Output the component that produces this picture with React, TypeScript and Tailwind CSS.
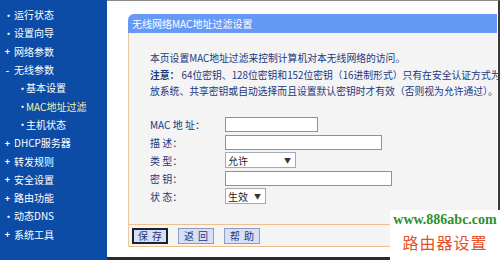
const MENU: { label: string; mark: string; sub?: boolean; active?: boolean }[] = [
  { label: "运行状态", mark: "•" },
  { label: "设置向导", mark: "•" },
  { label: "网络参数", mark: "+" },
  { label: "无线参数", mark: "-" },
  { label: "基本设置", mark: "•", sub: true },
  { label: "MAC地址过滤", mark: "•", sub: true, active: true },
  { label: "主机状态", mark: "•", sub: true },
  { label: "DHCP服务器", mark: "+" },
  { label: "转发规则", mark: "+" },
  { label: "安全设置", mark: "+" },
  { label: "路由功能", mark: "+" },
  { label: "动态DNS", mark: "•" },
  { label: "系统工具", mark: "+" },
];

const FONT = { fontFamily: '"Noto Sans CJK SC", "Noto Sans", sans-serif' };

function Sidebar() {
  return (
    <div className="w-[107px] h-full bg-[#0c4ca6] pt-[6px] shrink-0">
      {MENU.map((m) => (
        <div
          key={m.label}
          className={`h-[18.3px] flex items-center text-[10px] leading-none ${m.sub ? "pl-[18px]" : "pl-[4px]"} ${
            m.active ? "text-[#f6f0a8]" : "text-white"
          }`}
        >
          <span className="w-[7px] text-[9px] font-bold text-white text-center">{m.mark}</span>
          <span className={m.sub ? "ml-[1px]" : "ml-[3px]"}>{m.label}</span>
        </div>
      ))}
    </div>
  );
}

function Field({ w, h = 15 }: { w: number; h?: number }) {
  return <div className="bg-white border border-[#7f93b4]" style={{ width: w, height: h }} />;
}

function Select({ w, value }: { w: number; value: string }) {
  return (
    <div
      className="h-[16px] bg-white border border-[#a4abb5] flex items-center justify-between pl-[2px] pr-[4px] text-[10px] text-[#222]"
      style={{ width: w }}
    >
      <span>{value}</span>
      <span className="text-[7px] text-[#333]">▼</span>
    </div>
  );
}

function Row({ label, children }: { label: string; children: React.ReactNode }) {
  return (
    <div className="h-[18px] flex items-center">
      <span className="w-[75px] text-[10px] text-[#22377c]">{label}</span>
      {children}
    </div>
  );
}

function Btn({ label, focus }: { label: string; focus?: boolean }) {
  return (
    <div
      className={`h-[16px] w-[36px] flex items-center justify-center bg-[#d7e0f4] text-[10px] text-[#22377c] tracking-[4px] pl-[4px] ${
        focus ? "border-2 border-[#1d2233]" : "border border-[#8c9cc0]"
      }`}
    >
      {label}
    </div>
  );
}

export default function App() {
  return (
    <div className="w-[500px] h-[260px] flex overflow-hidden relative bg-white" style={FONT}>
      <Sidebar />
      <div className="flex-1 min-w-0 h-full flex flex-col border-t border-[#8a8a8a] border-r-2 border-r-[#3a3a3a] border-b-[3px] border-b-[#2b2b2b] overflow-hidden">
        <div className="ml-[21px] mr-[1px] mt-[13px] flex flex-col">
          <div className="h-[19px] bg-[#6699f6] rounded-tl-[6px] flex items-center pl-[4px] text-[10px] text-white whitespace-nowrap">
            无线网络MAC地址过滤设置
          </div>
          <div className="bg-[#f4f4f4] border-l border-[#e8c9a2] flex flex-col">
            <div className="pl-[21px] pt-[17px] text-[9.8px] leading-[16.5px] text-[#22377c]">
              <div className="whitespace-nowrap">本页设置MAC地址过滤来控制计算机对本无线网络的访问。</div>
              <div className="whitespace-nowrap">
                <span className="font-bold">注意：</span> 64位密钥、128位密钥和152位密钥（16进制形式）只有在安全认证方式为开
              </div>
              <div className="whitespace-nowrap">放系统、共享密钥或自动选择而且设置默认密钥时才有效（否则视为允许通过）。</div>
            </div>
            <div className="pl-[21px] pt-[15.5px] pb-[19px] flex flex-col">
              <Row label="MAC 地 址：">
                <Field w={93} />
              </Row>
              <Row label="描 述：">
                <Field w={157} />
              </Row>
              <Row label="类 型：">
                <Select w={71} value="允许" />
              </Row>
              <Row label="密 钥：">
                <Field w={167} />
              </Row>
              <Row label="状 态：">
                <Select w={41} value="生效" />
              </Row>
            </div>
            <div className="h-[23px] border-y border-[#f0c08c] flex items-center gap-[10px] pl-[3px]">
              <Btn label="保存" focus />
              <Btn label="返回" />
              <Btn label="帮助" />
            </div>
          </div>
        </div>
      </div>
      <div className="absolute left-[390px] top-[210px] w-[110px] h-[50px] bg-white flex flex-col items-center">
        <div className="text-[14px] font-bold leading-[20px] text-[#2f8f2f]" style={{ fontFamily: '"Liberation Serif", serif' }}>
          www.886abc.com
        </div>
        <div className="text-[16px] leading-[24px] tracking-[1px] text-[#e4502c]">路由器设置</div>
      </div>
    </div>
  );
}
